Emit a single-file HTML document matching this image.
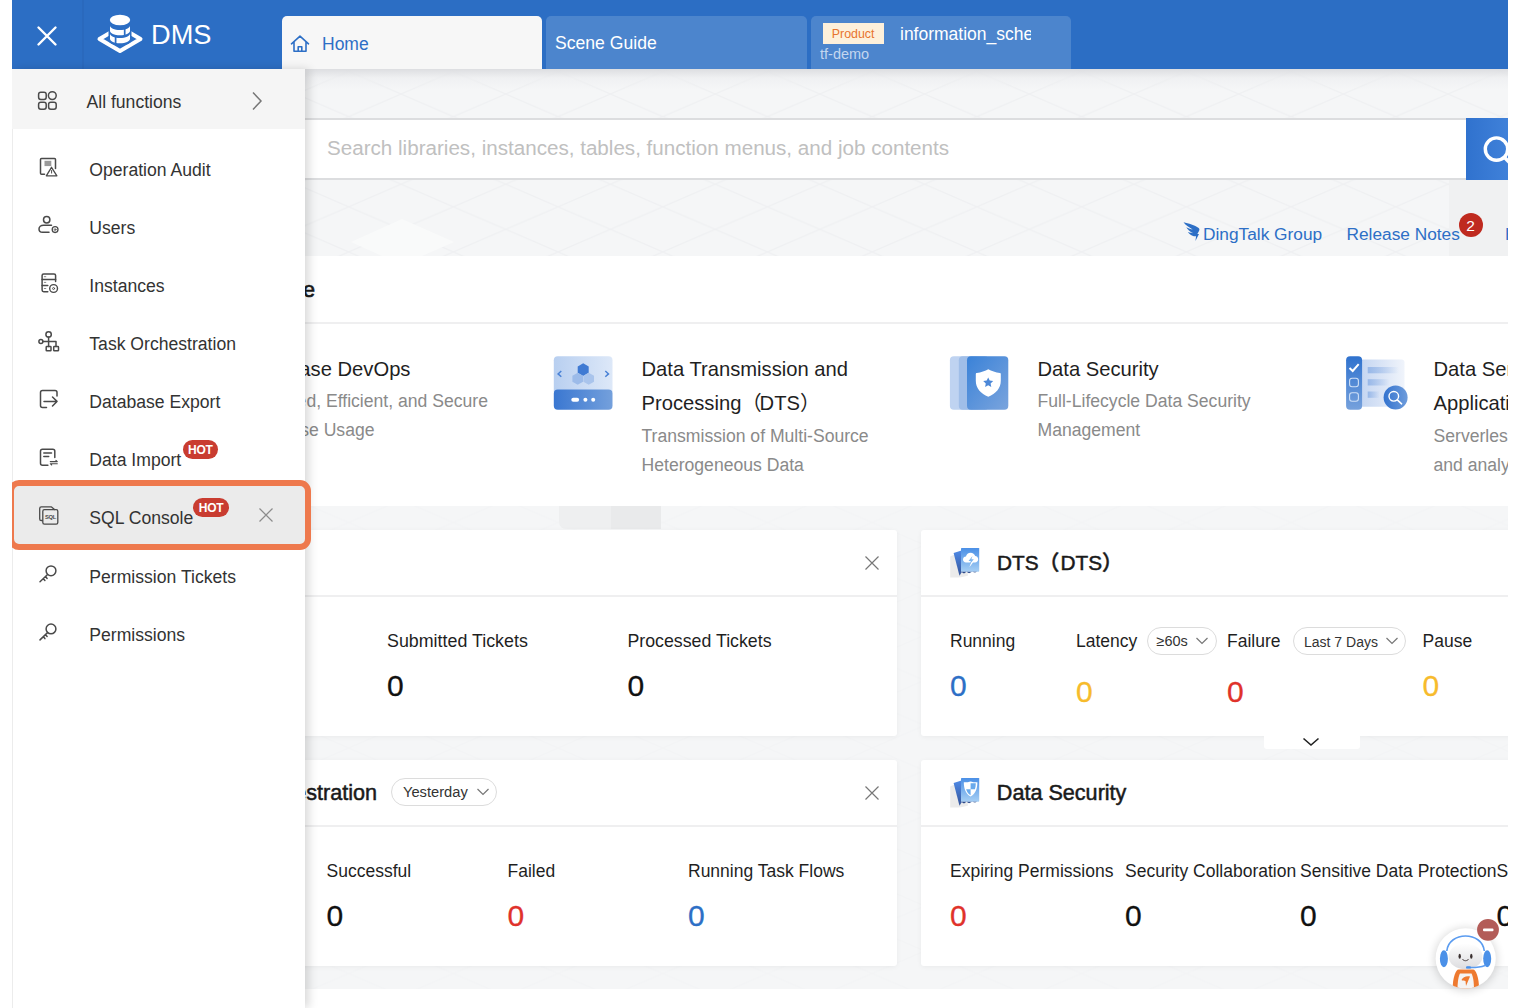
<!DOCTYPE html>
<html lang="en">
<head>
<meta charset="utf-8">
<title>DMS</title>
<style>
*{box-sizing:border-box;margin:0;padding:0}
html,body{width:1518px;height:1008px;overflow:hidden;background:#fff}
body{font-family:"Liberation Sans","Noto Sans CJK SC",sans-serif;color:#222;position:relative}
#clip{position:absolute;left:12px;top:0;width:1496px;height:1008px;overflow:hidden;background:#fff}
#pg{position:absolute;left:-12px;top:0;width:1518px;height:1008px}
.abs{position:absolute}
.t{position:absolute;white-space:nowrap;line-height:1}
/* header */
#hdr{left:0;top:0;width:1518px;height:69px;background:#2c6ec4}
#hdiv{left:82px;top:0;width:2px;height:69px;background:#2a69bd}
.tab{position:absolute;top:16px;height:53px;border-radius:5px 5px 0 0;background:#4c85cd}
#tab1{left:282px;width:260px;background:#f7f7f7}
#tab2{left:546px;width:261px}
#tab3{left:811px;width:260px}
/* background */
#bg{left:0;top:69px;width:1518px;height:920px;background:#f5f6f7}
#bgshadow{left:0;top:69px;width:1518px;height:20px;background:linear-gradient(#dddee1,rgba(236,237,239,.6) 45%,rgba(245,246,247,0))}
/* search */
#search{left:290px;top:118px;width:1177px;height:62px;background:#fff;border-top:2px solid #dcdddf;border-bottom:2px solid #dcdddf}
#sbtn{left:1466px;top:118px;width:60px;height:61.500px;background:linear-gradient(90deg,#3072ce,#4182da 75%)}
.lnk{color:#2d6fc6;font-size:17.300px}
/* panels */
.panel{position:absolute;background:#fff}
.card{position:absolute;background:#fff;border-radius:3px;box-shadow:0 1px 5px rgba(0,0,0,.05)}
.hl{position:absolute;height:1.5px;background:#efeff0}
.h18{font-size:20.200px;color:#1f1f1f}
.sub{font-size:17.600px;color:#8a8a8a}
.lab{font-size:17.5px;color:#1f1f1f}
.num{font-size:30px;color:#111;margin-left:1px;margin-top:-0.5px;-webkit-text-stroke:0.300px currentColor}
.ttl{font-size:21.600px;color:#1a1a1a;font-weight:normal;-webkit-text-stroke:0.500px #1a1a1a}
.pill{position:absolute;border:1.5px solid #dcdcdc;border-radius:14px;background:#fff;font-size:13px;color:#333;white-space:nowrap;line-height:1}
/* sidebar */
#side{left:12px;top:69px;width:293px;height:939px;background:#fff;box-shadow:4px 0 9px rgba(0,0,0,.15)}
#allf{left:12px;top:69px;width:293px;height:60px;background:#f5f5f5}
.mi{position:absolute;left:89.300px;font-size:17.600px;color:#333;margin-top:1px;white-space:nowrap;line-height:1}
.hot{position:absolute;height:18.800px;width:35.500px;text-align:center;border-radius:9.400px;background:#c93c30;color:#fff;font-size:12px;font-weight:bold;line-height:20px;letter-spacing:-.3px}
#focus{left:7.500px;top:480.300px;width:303.400px;height:70px;border:6.200px solid #ee794d;border-radius:11px;background:#ebebeb}
</style>
</head>
<body>
<div id="clip"><div id="pg">

<!-- BACKGROUND -->
<div class="abs" id="bg">
<svg width="1518" height="920" style="position:absolute;left:0;top:0">
<defs><pattern id="iso" width="104.700" height="45.100" patternUnits="userSpaceOnUse" x="34.600" y="2.500">
<path d="M0 0L104.700 45.100M0 45.100L104.700 0" stroke="#eff0f2" stroke-width="1.300" fill="none"/>
</pattern></defs>
<rect width="1518" height="190" fill="url(#iso)"/><rect y="190" width="1518" height="730" fill="url(#iso)" opacity="0.350"/>
<rect x="1449" y="111" width="70" height="76" fill="#f0f1f2"/>
<path d="M351 173L402 150L454 173L422 187H382Z" fill="#f9fafa"/>
<path d="M559 437H661V452Q661 460 653 460H567Q559 460 559 452Z" fill="#eeeff0"/>
<rect x="611" y="437" width="50" height="23" fill="#e9eaeb"/>
</svg>
</div>
<div class="abs" id="bgshadow"></div>

<!-- HEADER -->
<div class="abs" id="hdr"></div>
<div class="abs" id="hdiv"></div>

<!-- close X -->
<svg class="abs" style="left:36px;top:25px" width="22" height="22" viewBox="0 0 22 22"><path d="M2.5 2.5L19.5 19.5M19.5 2.5L2.5 19.5" stroke="#fff" stroke-width="2.4" stroke-linecap="round" fill="none"/></svg>
<!-- logo -->
<svg class="abs" style="left:96px;top:13px" width="48" height="42" viewBox="0 0 48 42">
<path d="M24 14L44.500 26L24 38L3.500 26Z" fill="none" stroke="#fff" stroke-width="4" stroke-linejoin="round"/>
<path d="M12.500 6v21c0 3 5 5.500 11.500 5.500s11.500-2.500 11.500-5.500V6z" fill="#2c6ec4"/>
<ellipse cx="24" cy="7" rx="10.200" ry="5.200" fill="#fff"/>
<path d="M14 12.500c0 2.500 4.400 4.600 10 4.600s10-2.100 10-4.600v5.200c0 2.500-4.400 4.600-10 4.600s-10-2.100-10-4.600z" fill="#fff"/>
<path d="M14 20.500c0 2.500 4.400 4.600 10 4.600s10-2.100 10-4.600v5.200c0 2.500-4.400 4.600-10 4.600s-10-2.100-10-4.600z" fill="#fff"/>
<path d="M28.700 14v9.500M19.600 22v9.500" stroke="#2c6ec4" stroke-width="1.700"/>
</svg>
<div class="t" style="left:151px;top:20.700px;font-size:27.200px;color:#fff">DMS</div>
<!-- tabs -->
<div class="tab" id="tab1"></div>
<div class="tab" id="tab2"></div>
<div class="tab" id="tab3"></div>
<svg class="abs" style="left:290px;top:34px" width="20" height="20" viewBox="0 0 20 20"><path d="M1.500 9.800L10 2.200L18.500 9.800M4 8v9.300h12V8M8.200 17.300v-4.500h3.600v4.500" fill="none" stroke="#2d6fc6" stroke-width="1.600" stroke-linejoin="round" stroke-linecap="round"/></svg>
<div class="t" style="left:322px;top:35.600px;font-size:17.5px;color:#2d6fc6">Home</div>
<div class="t" style="left:555px;top:35.200px;font-size:17.600px;color:#fff">Scene Guide</div>
<div class="abs" style="left:823px;top:23px;width:61px;height:21px;background:#fdf0db"></div>
<div class="t" style="left:831.800px;top:27.800px;font-size:12.400px;color:#e8742e">Product</div>
<div class="abs" style="left:900px;top:22px;width:131px;height:24px;overflow:hidden"><div class="t" style="left:0;top:4.100px;font-size:17.5px;color:#fff">information_schema</div></div>
<div class="t" style="left:820px;top:46.800px;font-size:14.500px;color:#c3d6ef">tf-demo</div>
<!--HEADER-CONTENT-->


<!-- search -->
<div class="abs" id="search"></div>
<div class="t" style="left:327px;top:138px;font-size:20.620px;color:#c0c0c0">Search libraries, instances, tables, function menus, and job contents</div>
<div class="abs" id="sbtn"></div>
<svg class="abs" style="left:1480px;top:134px" width="40" height="34" viewBox="0 0 40 34"><circle cx="16.500" cy="15.100" r="11.200" fill="none" stroke="#fff" stroke-width="3.400"/><path d="M24.500 23.500L32 31" stroke="#fff" stroke-width="3.400" stroke-linecap="round"/></svg>
<!-- links -->
<svg class="abs" style="left:1183px;top:221px" width="17.300" height="21.600" viewBox="0 0 16 20"><path d="M0.500 1.200C5 2 11 4 14.500 6.500C15.500 7.300 15.300 8.300 14.800 9.300L13.300 12h1.500L11.500 18.500l0.600-4.300H10C7.500 13.500 5.500 12 4.500 10.300c2 0.700 4 1 5 1C6.500 9.800 4 7.800 3 5.800c2 1 4.500 1.800 6 2C5.500 6 2 3.500 0.500 1.200z" fill="#2d6fc6"/></svg>
<div class="t lnk" style="left:1203px;top:226.300px">DingTalk Group</div>
<div class="t lnk" style="left:1346.500px;top:226.300px">Release Notes</div>
<div class="abs" style="left:1458.500px;top:213.200px;width:24.200px;height:24.200px;border-radius:13px;background:#bf2a1f"></div>
<div class="t" style="left:1458.500px;top:217.500px;width:24.200px;text-align:center;font-size:15.500px;color:#fff">2</div>
<div class="t lnk" style="left:1505px;top:226px">Help</div>

<!-- feature panel -->
<div class="panel" style="left:0;top:256px;width:1518px;height:250px"></div>
<div class="hl" style="left:0;top:322px;width:1518px"></div>
<div class="t ttl" style="right:1202.900px;top:279.100px;-webkit-text-stroke-width:0.700px">Core Feature</div>

<div class="t h18" style="left:245.500px;top:359px">Database DevOps</div>
<div class="t sub" style="right:1030px;top:393px">Unified, Efficient, and Secure</div>
<div class="t sub" style="right:1143.5px;top:422px">Database Usage</div>

<!--ICON-DTS-->
<div class="t h18" style="left:641.500px;top:359px">Data Transmission and</div>
<div class="t h18" style="left:641.500px;top:393px">Processing<span style="letter-spacing:-2px">（</span>DTS<span style="letter-spacing:-2px">）</span></div>
<div class="t sub" style="left:641.500px;top:428px">Transmission of Multi-Source</div>
<div class="t sub" style="left:641.500px;top:457px">Heterogeneous Data</div>

<!--ICON-SEC-->
<div class="t h18" style="left:1037.500px;top:359px">Data Security</div>
<div class="t sub" style="left:1037.500px;top:393px">Full-Lifecycle Data Security</div>
<div class="t sub" style="left:1037.500px;top:422px">Management</div>

<!--ICON-SVC-->
<div class="t h18" style="left:1433.500px;top:359px">Data Service and</div>
<div class="t h18" style="left:1433.500px;top:393px">Application</div>
<div class="t sub" style="left:1433.500px;top:428px">Serverless query</div>
<div class="t sub" style="left:1433.500px;top:457px">and analysis</div>

<!-- card 1 -->
<div class="card" style="left:0;top:530px;width:897px;height:206px"></div>
<div class="hl" style="left:0;top:595px;width:897px"></div>
<svg class="abs" style="left:864px;top:555px" width="16" height="16" viewBox="0 0 16 16"><path d="M1.500 1.500L14.500 14.500M14.500 1.500L1.500 14.500" stroke="#777" stroke-width="1.200" fill="none"/></svg>
<div class="t lab" style="left:387px;top:633px;font-size:17.850px">Submitted Tickets</div>
<div class="t num" style="left:386px;top:671px">0</div>
<div class="t lab" style="left:627.500px;top:633px;font-size:17.750px">Processed Tickets</div>
<div class="t num" style="left:626.500px;top:671px">0</div>

<!-- card 2 -->
<div class="card" style="left:920.500px;top:530px;width:600px;height:206px"></div>
<div class="hl" style="left:920.500px;top:595px;width:600px"></div>
<div class="abs" style="left:1263.500px;top:735px;width:96px;height:14px;background:#fff;border-radius:0 0 3px 3px"></div>
<svg class="abs" style="left:1301px;top:736px" width="20" height="12" viewBox="0 0 20 12"><path d="M2.500 2.500L10 9L17.500 2.500" stroke="#222" stroke-width="1.600" fill="none"/></svg>
<!--ICON-C2-->
<div class="t ttl" style="left:997px;top:551.200px;font-size:20.800px">DTS<span style="font-weight:500;font-family:'Noto Sans CJK SC',sans-serif;letter-spacing:1px">（</span>DTS<span style="font-weight:500;font-family:'Noto Sans CJK SC',sans-serif">）</span></div>
<div class="t lab" style="left:950px;top:633px">Running</div>
<div class="t num" style="left:949px;top:671px;color:#2d6fc6">0</div>
<div class="t lab" style="left:1076px;top:633px">Latency</div>
<div class="pill" style="left:1147px;top:627px;width:70px;height:28px"><span class="t" style="left:8.500px;top:6px;font-size:14.500px">≥60s</span><svg class="abs" style="left:47px;top:8px" width="14" height="10" viewBox="0 0 14 10"><path d="M1.500 2L7 7.500L12.500 2" stroke="#777" stroke-width="1.200" fill="none"/></svg></div>
<div class="t num" style="left:1075px;top:677px;color:#f7bb2c">0</div>
<div class="t lab" style="left:1227px;top:633px">Failure</div>
<div class="pill" style="left:1293px;top:627px;width:113px;height:28px"><span class="t" style="left:10px;top:6.500px;font-size:14px">Last 7 Days</span><svg class="abs" style="left:91px;top:8px" width="14" height="10" viewBox="0 0 14 10"><path d="M1.500 2L7 7.500L12.500 2" stroke="#777" stroke-width="1.200" fill="none"/></svg></div>
<div class="t num" style="left:1226px;top:677px;color:#e0322b">0</div>
<div class="t lab" style="left:1422.500px;top:633px">Pause</div>
<div class="t num" style="left:1421.500px;top:671px;color:#f7bb2c">0</div>

<!-- card 3 -->
<div class="card" style="left:0;top:759.500px;width:897px;height:206.500px"></div>
<div class="hl" style="left:0;top:825px;width:897px"></div>
<svg class="abs" style="left:864px;top:785px" width="16" height="16" viewBox="0 0 16 16"><path d="M1.500 1.500L14.500 14.500M14.500 1.500L1.500 14.500" stroke="#777" stroke-width="1.200" fill="none"/></svg>
<div class="t ttl" style="right:1141px;top:781.700px">Task Orchestration</div>
<div class="pill" style="left:391px;top:778px;width:105.500px;height:27.500px"><span class="t" style="left:11px;top:6px;font-size:14.700px">Yesterday</span><svg class="abs" style="left:84px;top:8px" width="14" height="10" viewBox="0 0 14 10"><path d="M1.500 2L7 7.500L12.500 2" stroke="#777" stroke-width="1.200" fill="none"/></svg></div>
<div class="t lab" style="left:326.500px;top:862.500px">Successful</div>
<div class="t num" style="left:325.500px;top:901px">0</div>
<div class="t lab" style="left:507.500px;top:862.500px">Failed</div>
<div class="t num" style="left:506.500px;top:901px;color:#e0322b">0</div>
<div class="t lab" style="left:688px;top:862.500px">Running Task Flows</div>
<div class="t num" style="left:687px;top:901px;color:#2d6fc6">0</div>

<!-- card 4 -->
<div class="card" style="left:920.500px;top:759.500px;width:600px;height:206.500px"></div>
<div class="hl" style="left:920.500px;top:825px;width:600px"></div>
<!--ICON-C4-->
<div class="t ttl" style="left:996.800px;top:782.200px">Data Security</div>
<div class="t lab" style="left:950px;top:862.500px">Expiring Permissions</div>
<div class="t num" style="left:949px;top:901.500px;color:#e0322b">0</div>
<div class="t lab" style="left:1125px;top:862.500px">Security Collaboration</div>
<div class="t num" style="left:1124px;top:901.500px">0</div>
<div class="t lab" style="left:1300px;top:862.500px">Sensitive Data Protection</div>
<div class="t num" style="left:1299px;top:901.500px">0</div>
<div class="t lab" style="left:1496.500px;top:862.500px">Security Rules</div>
<div class="t num" style="left:1495.500px;top:901.500px">0</div>

<!-- bottom white -->
<div class="abs" style="left:0;top:989px;width:1518px;height:19px;background:#fff"></div>
<svg class="abs" style="left:0;top:0" width="1518" height="1008" viewBox="0 0 1518 1008">
<defs>
<linearGradient id="gTop" x1="0" x2="1"><stop offset="0" stop-color="#b8cff0"/><stop offset="1" stop-color="#dde8f8"/></linearGradient>
<linearGradient id="gBar" x1="0" x2="1"><stop offset="0" stop-color="#3a77d1"/><stop offset="1" stop-color="#74a0dc"/></linearGradient>
<linearGradient id="gSec" x1="0" y1="0" x2="1" y2="1"><stop offset="0" stop-color="#3a82d8"/><stop offset="1" stop-color="#7aa4dd"/></linearGradient>
<linearGradient id="gVbar" x1="0" y1="0" x2="0" y2="1"><stop offset="0" stop-color="#2f72ce"/><stop offset="1" stop-color="#76a1dc"/></linearGradient>
<linearGradient id="gPanel" x1="0" x2="1"><stop offset="0" stop-color="#c2d4f1"/><stop offset="1" stop-color="#f0f4fb"/></linearGradient>
<linearGradient id="gLine" x1="0" x2="1"><stop offset="0" stop-color="#98b8e8"/><stop offset="1" stop-color="#98b8e8" stop-opacity="0"/></linearGradient>
<linearGradient id="gCirc" x1="0" x2="1"><stop offset="0" stop-color="#3373cf"/><stop offset="1" stop-color="#6e9cdb"/></linearGradient>
<linearGradient id="gFront" x1="0" y1="0" x2="0" y2="1"><stop offset="0" stop-color="#4a8fe6"/><stop offset="1" stop-color="#a6cff4"/></linearGradient>
<linearGradient id="gBack" x1="0" y1="0" x2="0" y2="1"><stop offset="0" stop-color="#4f8ae6"/><stop offset="1" stop-color="#33539a"/></linearGradient>
<linearGradient id="gHead" x1="0" y1="0" x2="0" y2="1"><stop offset="0" stop-color="#ffffff"/><stop offset="1" stop-color="#dcdcdf"/></linearGradient>
<filter id="blur6" x="-50%" y="-50%" width="200%" height="200%"><feGaussianBlur stdDeviation="5"/></filter>
<clipPath id="botclip"><circle cx="1465.700" cy="958.400" r="30.100"/></clipPath>
</defs>
<!-- DTS feature icon -->
<path d="M553.800 360.200a4 4 0 0 1 4-4h50.700a4 4 0 0 1 4 4V392H553.800Z" fill="url(#gTop)"/>
<rect x="553.800" y="389.600" width="58.700" height="20.100" rx="4" fill="url(#gBar)"/>
<path d="M583.200 363.300l5.500 3.100v6.300l-5.500 3.200-5.500-3.200v-6.300z" fill="#3f7ad3"/>
<path d="M577.700 372.700l5.300 3v6l-5.300 3-5.300-3v-6z" fill="#9cbbe9"/><path d="M588.700 372.700l5.300 3v6l-5.300 3-5.300-3v-6z" fill="#a9c4ec"/>
<path d="M561.300 371l-3.200 2.900 3.200 2.900M605.300 371l3.200 2.900-3.200 2.900" fill="none" stroke="#4a82d6" stroke-width="1.500"/>
<rect x="571.300" y="397.800" width="7.800" height="4" rx="2" fill="#fff"/><circle cx="585.400" cy="399.800" r="2" fill="#fff"/><circle cx="593.200" cy="399.800" r="2" fill="#fff"/>
<!-- security feature icon -->
<rect x="949.900" y="356.200" width="30" height="53.500" rx="4" fill="#bfd3f1"/>
<rect x="958.800" y="356.200" width="30" height="53.500" rx="4" fill="#a0bee8"/>
<rect x="967" y="356.200" width="41.300" height="53.500" rx="4" fill="url(#gSec)"/>
<path d="M988.300 369.200c3 1.700 7.500 3.200 11.500 3.800.7 0 1 .5 1 1.200v6.500c0 7.500-5 13-12.500 16-7.500-3-12.500-8.500-12.500-16v-6.500c0-.7.300-1.200 1-1.200 4-.6 8.500-2.100 11.500-3.800z" fill="#fff"/>
<path d="M988.200 377.400l1.500 3.200 3.500.4-2.600 2.400.7 3.500-3.100-1.700-3.100 1.700.7-3.500-2.600-2.400 3.500-.4z" fill="#4c88d8"/>
<!-- service feature icon -->
<rect x="1358" y="359.500" width="46.500" height="47.300" rx="3" fill="url(#gPanel)"/>
<rect x="1367.700" y="367" width="31.300" height="6.300" fill="url(#gLine)"/><rect x="1367.700" y="379.200" width="21.600" height="6.300" fill="url(#gLine)"/><rect x="1367.700" y="391.500" width="12" height="6.300" fill="url(#gLine)"/>
<rect x="1346.100" y="356.200" width="16" height="53.500" rx="4" fill="url(#gVbar)"/>
<path d="M1349.500 368l3.200 3 6-6.800" fill="none" stroke="#fff" stroke-width="2"/>
<rect x="1349.600" y="378.200" width="8.800" height="8.500" rx="2.500" fill="none" stroke="#cfe0f6" stroke-width="1.100"/><rect x="1349.600" y="392.700" width="8.800" height="8.500" rx="2.500" fill="none" stroke="#cfe0f6" stroke-width="1.100"/>
<circle cx="1395.600" cy="397.600" r="12" fill="url(#gCirc)"/>
<circle cx="1393.800" cy="396.300" r="4.800" fill="none" stroke="#fff" stroke-width="1.400"/><path d="M1397.300 399.800l4.300 4" stroke="#fff" stroke-width="1.600" stroke-linecap="round"/>
<!-- card icons -->
<g transform="translate(0,0)">
<path d="M950.200 556.500C955 553.500 962 553.500 966 556L968 575.500C962 578 954 577.500 950.200 577.500Z" fill="#ebebeb"/>
<path d="M953.600 553L961.500 550.500V572.500L959.500 575.800Z" fill="url(#gBack)"/>
<rect x="961" y="547.900" width="18.200" height="23.800" rx="0.600" fill="url(#gFront)"/>
<path d="M961.500 572L964 573.500L966.500 571.800L969 573.200L972 571.700L975 572.500L977 571.700H961.500Z" fill="#2c4a8a"/>
<path d="M966 562.500c-1.800 0-3-1.400-3-3s1.300-2.900 3-2.900c.4-2.300 2.300-3.800 4.600-3.800 2.200 0 4 1.300 4.600 3.300 1.700.100 3 1.500 3 3.200 0 1.800-1.400 3.200-3.200 3.200H973l-3.600 4.800 1.600-4.800Z" fill="#fff"/><path d="M972.500 556l-4 5h2.300l-1.200 3.500 4.200-5.200h-2.400z" fill="#7fb6ee"/>
</g>
<g transform="translate(0,230)">
<path d="M950.200 556.500C955 553.500 962 553.500 966 556L968 575.500C962 578 954 577.500 950.200 577.500Z" fill="#ebebeb"/>
<path d="M953.600 553L961.500 550.500V572.500L959.500 575.800Z" fill="url(#gBack)"/>
<rect x="961" y="547.900" width="18.200" height="23.800" rx="0.600" fill="url(#gFront)"/>
<path d="M961.500 572L964 573.500L966.500 571.800L969 573.200L972 571.700L975 572.500L977 571.700H961.500Z" fill="#2c4a8a"/>
<path d="M963.800 552.300c3 0 5.500-.4 6.800-.9 1.300.5 3.800.9 6.800.9 0 7-2.300 11.800-6.800 14.200-4.500-2.400-6.800-7.200-6.800-14.200z" fill="#fff"/><path d="M970.600 553.300h5.200c0 2.300-.3 4.200-.9 6h-4.300zM970.600 559.300v6c-2-1.100-3.600-3.200-4.500-6z" fill="#6aaaec"/>
</g>
<!-- chatbot -->
<circle cx="1465.700" cy="959.400" r="31" fill="#000" opacity="0.160" filter="url(#blur6)"/>
<circle cx="1465.700" cy="958.400" r="30.100" fill="#fff"/>
<g clip-path="url(#botclip)">
<path d="M1452.600 990c0-12 3-20.500 6-20.500h14.500c3 0 6 8.500 6 20.500z" fill="#ee7a30"/>
<path d="M1457.500 990c0-8 1-14 2.500-16.500h11.500c1.500 2.500 2.500 8.500 2.500 16.500z" fill="#f4f4f4"/>
<path d="M1461.500 980c1-2.500 5-4.500 8.500-3.500l-4 9.500-.5-5c-1.500-.5-3 0-4-1z" fill="#ee7a30"/>
</g>
<ellipse cx="1465.500" cy="956.400" rx="17" ry="12.800" fill="url(#gHead)"/>
<path d="M1446.800 951c2-20 35.500-20 37.500 0" fill="none" stroke="#5b9cf0" stroke-width="1.600"/>
<ellipse cx="1443.900" cy="958.700" rx="4" ry="8.500" fill="#4a90e8"/><ellipse cx="1487.200" cy="958.700" rx="4" ry="8.500" fill="#4a90e8"/>
<path d="M1485 965.500c-5 2-12 2.300-18 2" fill="none" stroke="#5b9cf0" stroke-width="1.500" stroke-linecap="round"/><rect x="1466" y="966.200" width="5" height="2.400" rx="1.200" fill="#4a90e8"/>
<ellipse cx="1459.700" cy="956.200" rx="1.200" ry="2.500" fill="#3a3030"/><ellipse cx="1471.300" cy="956.200" rx="1.200" ry="2.500" fill="#3a3030"/>
<path d="M1462.500 959.300c1.500 2 4.500 2 6 0" fill="none" stroke="#3a3030" stroke-width="0.900" stroke-linecap="round"/>
<circle cx="1488" cy="929.800" r="10.900" fill="#b35c58"/><rect x="1483" y="928.600" width="10.500" height="2.600" rx="1" fill="#fff"/>
</svg>
<!--BOT-->
<!--MAIN-CONTENT-->

<div class="abs" id="side"></div>
<div class="abs" id="allf"></div>
<div class="mi" style="left:86.500px;top:93px">All functions</div>
<svg class="abs" style="left:250px;top:90px" width="14" height="22" viewBox="0 0 14 22"><path d="M3 2.500L11 11L3 19.500" fill="none" stroke="#777" stroke-width="1.500"/></svg>
<div class="abs" style="left:12px;top:129px;width:1px;height:879px;background:#ececec"></div>
<div class="abs" id="focus"></div>
<svg class="abs" style="left:0;top:0" width="320" height="700" viewBox="0 0 320 700"><g fill="none" stroke="#4a4a4a" stroke-width="1.500" stroke-linecap="round" stroke-linejoin="round">
<!-- all functions -->
<rect x="38.600" y="92.200" width="7.600" height="7.200" rx="2.200"/><circle cx="52.300" cy="95.600" r="3.900"/><rect x="38.600" y="102.200" width="7.600" height="7" rx="2.200"/><rect x="48.600" y="102.200" width="7.600" height="7" rx="2.200"/>
<!-- audit -->
<path d="M44.500 174.300H41.500c-.6 0-1-.4-1-1V159.500c0-.6.400-1 1-1H54.500c.6 0 1 .4 1 1V168.500"/>
<rect x="44.500" y="160.800" width="6.800" height="5.300" fill="#9a9a9a" stroke="none"/>
<path d="M51.500 167.300L46.300 175.800H56.900Z" stroke-width="1.300"/><path d="M51.600 170.500v2.600" stroke-width="1"/>
<!-- users -->
<circle cx="46.700" cy="219.700" r="3.200"/>
<path d="M51.500 225.300H43.500c-2.600 0-4.500 1.600-4.500 3.700 0 1.900 1.300 3.300 3.500 3.300H49"/>
<circle cx="55.100" cy="229.600" r="2.900" stroke-width="1.300"/><circle cx="55.100" cy="229.600" r="0.900" stroke-width="0.800"/>
<!-- instances -->
<path d="M47.800 291.700H43.700c-.9 0-1.600-.7-1.600-1.600V275.600c0-.9.700-1.600 1.600-1.600H54c.9 0 1.600.7 1.600 1.600V281.500"/>
<path d="M42.100 279.400H55.600M42.100 285.400H47.800"/>
<path d="M44.300 276.700h1.500M44.300 282.400h1.500M44.300 288.500h1.500" stroke-width="1" stroke="#888"/>
<circle cx="53.600" cy="288.500" r="3.900" stroke-width="1.400"/><circle cx="53.600" cy="288.500" r="1" stroke-width="0.900"/>
<!-- task -->
<circle cx="48.600" cy="334.400" r="2.700"/><circle cx="40.900" cy="341.600" r="2"/>
<path d="M48.600 337.200V346.500M43 341.600H56V346.500"/>
<rect x="46.200" y="346.600" width="4.800" height="4.200" rx="0.600"/><rect x="53.700" y="346.600" width="4.800" height="4.200" rx="0.600"/>
<!-- export -->
<path d="M57 396V392.500c0-1.100-.9-2-2-2H42.500c-1.100 0-2 .9-2 2V405.500c0 1.100.9 2 2 2H46.500"/>
<path d="M44 401.400H57M52.500 397L57 401.400L52.500 406"/>
<!-- import -->
<path d="M47.900 465.200H42.500c-1.100 0-2-.9-2-2V451.200c0-1.100.9-2 2-2H52.800c1.100 0 2 .9 2 2V457.500"/>
<path d="M43.800 452.900H51.500M43.800 456.600H48.700"/>
<path d="M50.300 461.600h7l-1.400-1.300M57.300 463.700h-7l1.400 1.300" stroke-width="1.100"/>
<!-- sql -->
<path d="M42.300 520.500H41.300c-.9 0-1.600-.7-1.600-1.600V508.500c0-.9.700-1.600 1.600-1.600H51.500L54.500 509.500" stroke-width="1.300"/>
<rect x="42.800" y="509.700" width="15" height="14.500" rx="1.600" stroke-width="1.300"/>
<!-- keys -->
<circle cx="51" cy="570.800" r="4.900"/><path d="M47.300 574.800L40 581.800M45.600 576.600l1.500 1.800M43.400 578.700l1.500 1.800"/>
<circle cx="51" cy="628.900" r="4.900"/><path d="M47.300 632.900L40 639.900M45.600 634.700l1.500 1.800M43.400 636.800l1.500 1.800"/>
</g>
<text x="50.400" y="519.200" font-family="Liberation Sans, sans-serif" font-size="5.800" font-weight="bold" fill="#4a4a4a" text-anchor="middle" letter-spacing="-0.3">SQL</text>
</svg>

<div class="mi" style="top:161px">Operation Audit</div>
<div class="mi" style="top:219px">Users</div>
<div class="mi" style="top:277px">Instances</div>
<div class="mi" style="top:335px">Task Orchestration</div>
<div class="mi" style="top:393px">Database Export</div>
<div class="mi" style="top:451px">Data Import</div>
<div class="mi" style="top:509px">SQL Console</div>
<div class="mi" style="top:568px">Permission Tickets</div>
<div class="mi" style="top:626px">Permissions</div>
<div class="hot" style="left:182.500px;top:439.800px">HOT</div>
<div class="hot" style="left:193.300px;top:498px">HOT</div>
<svg class="abs" style="left:257.500px;top:507px" width="16" height="16" viewBox="0 0 16 16"><path d="M1.500 1.500L14.500 14.500M14.500 1.500L1.500 14.500" stroke="#8c8c8c" stroke-width="1.200" fill="none"/></svg>
<!--SIDEBAR-->

</div></div>
</body>
</html>
